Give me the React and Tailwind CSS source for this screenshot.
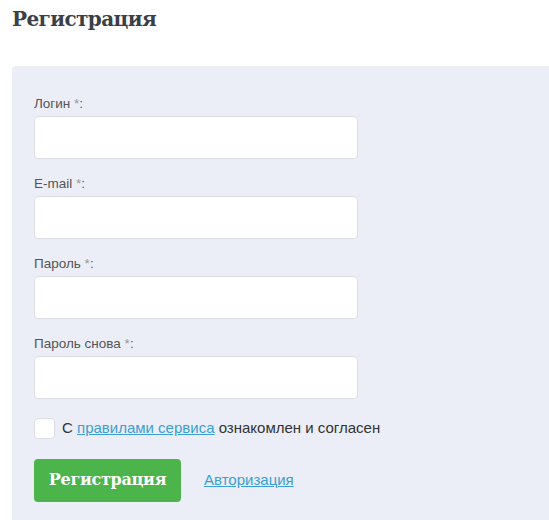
import { useState } from 'react'

const fields = [
  { label: 'Логин', type: 'text' },
  { label: 'E-mail', type: 'email' },
  { label: 'Пароль', type: 'password' },
  { label: 'Пароль снова', type: 'password' },
]

export default function App() {
  const [agree, setAgree] = useState(false)

  return (
    <div className="min-h-[520px] bg-white pl-3 font-['Liberation_Sans',Arial,sans-serif] overflow-hidden">
      <h1 className="pt-[7px] h-[66px] text-[20px] font-bold leading-[24px] text-[#3b3f48] font-['DejaVu_Serif',serif] tracking-[-0.6px]">
        Регистрация
      </h1>

      <div className="bg-[#ebeef7] rounded-tl-[4px] pl-[22px] pt-[30px] pb-[30px] h-[460px]">
        <form className="flex flex-col" onSubmit={(e) => e.preventDefault()}>
          {fields.map((f) => (
            <div key={f.label} className="mb-[17px]">
              <label className="block text-[13.5px] leading-[16px] text-[#555] mb-[4px]">
                {f.label} <span className="text-[#999]">*</span>:
              </label>
              <input
                type={f.type}
                className="block w-[324px] h-[43px] bg-white border border-[#dadde4] rounded-[4px] px-3 text-[14px] outline-none"
              />
            </div>
          ))}

          <label className="flex items-center gap-[7px] mt-[1px] text-[15px] text-[#333]">
            <input
              type="checkbox"
              checked={agree}
              onChange={() => setAgree(!agree)}
              className="appearance-none w-[21px] h-[21px] bg-white border border-[#dadde4] rounded-[4px]"
            />
            <span>
              С{' '}
              <a href="#" className="text-[#3a9fd4] underline">правилами сервиса</a>{' '}
              ознакомлен и согласен
            </span>
          </label>

          <div className="flex items-center gap-[23px] mt-[19px]">
            <button
              type="submit"
              className="w-[147px] h-[43px] rounded-[4px] bg-[#4bb54b] text-white text-[16px] font-bold font-['DejaVu_Serif',serif] tracking-[-0.3px]"
            >
              Регистрация
            </button>
            <a href="#" className="text-[15px] text-[#3a9fd4] underline">Авторизация</a>
          </div>
        </form>
      </div>
    </div>
  )
}
